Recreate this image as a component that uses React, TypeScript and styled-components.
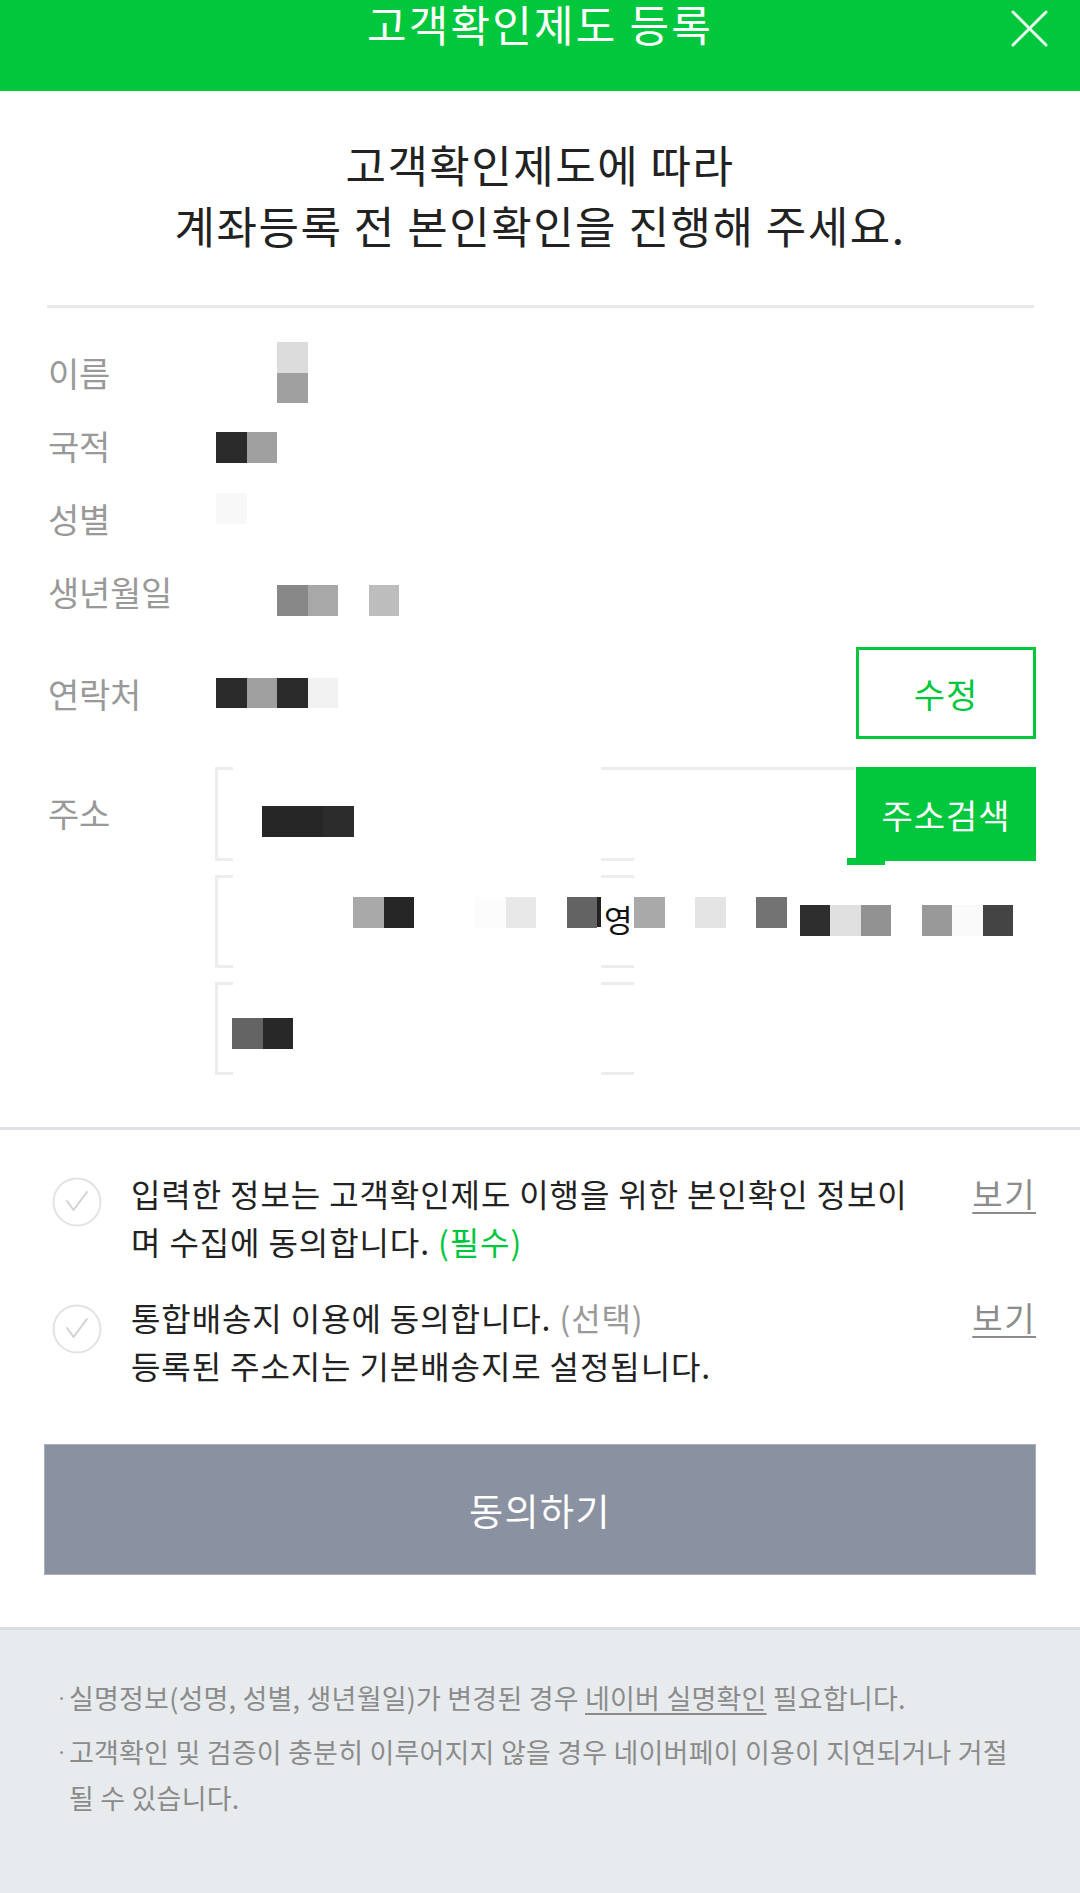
import React from "react";
import styled, { createGlobalStyle } from "styled-components";

const GREEN = "#00c73c";

const GlobalStyle = createGlobalStyle`
  html, body { margin: 0; padding: 0; background: #fff; }
  body {
    font-family: "Noto Sans CJK KR", "Noto Sans", sans-serif;
    -webkit-font-smoothing: antialiased;
  }
  * { box-sizing: border-box; }
`;

const Page = styled.div`
  width: 1080px;
  min-height: 1893px;
  display: flex;
  flex-direction: column;
  background: #fff;
`;

/* ---------- header ---------- */
const Header = styled.header`
  height: 91px;
  background: ${GREEN};
  display: grid;
  grid-template-columns: 1fr auto 1fr;
  align-items: start;
`;

const HeaderTitle = styled.h1`
  grid-column: 2;
  margin: 0;
  color: #fff;
  font-size: 43px;
  font-weight: 400;
  line-height: 46px;
  letter-spacing: 2.2px;
  white-space: nowrap;
`;

const CloseButton = styled.button`
  grid-column: 3;
  justify-self: end;
  margin: 10px 32px 0 0;
  padding: 0;
  width: 37px;
  height: 37px;
  border: 0;
  background: none;
  display: flex;
`;

/* ---------- intro ---------- */
const Intro = styled.h2`
  margin: 0;
  padding: 43px 0 49px;
  text-align: center;
  color: #222;
  font-size: 44px;
  font-weight: 400;
  line-height: 61px;
  letter-spacing: 1.5px;
`;

const Divider = styled.hr`
  margin: 0 46px 0 47px;
  border: 0;
  height: 3px;
  background: #e9e9e9;
`;

/* ---------- info ---------- */
const Info = styled.section`
  padding: 28px 44px 52px 48px;
  display: flex;
  flex-direction: column;
`;

const InfoRow = styled.div<{ $gapTop?: number }>`
  display: grid;
  grid-template-columns: 168px 1fr auto;
  align-items: center;
  min-height: 73px;
  margin-top: ${(p) => p.$gapTop ?? 0}px;
`;

const AddressRow = styled.div`
  display: grid;
  grid-template-columns: 168px 1fr;
  align-items: start;
  margin-top: 28px;
`;

const Label = styled.div<{ $top?: number }>`
  color: #999;
  font-size: 34px;
  line-height: 73px;
  letter-spacing: -0.3px;
  white-space: nowrap;
  margin-top: ${(p) => p.$top ?? 0}px;
`;

const Mosaic = styled.div<{ $dx?: number; $dy?: number; $cols: number }>`
  display: grid;
  grid-template-columns: repeat(${(p) => p.$cols}, 30.5px);
  grid-auto-rows: 30.5px;
  margin-left: ${(p) => p.$dx ?? 0}px;
  transform: translateY(${(p) => p.$dy ?? 0}px);
`;

const Cell = styled.span<{ $c: string | null }>`
  background: ${(p) => p.$c ?? "transparent"};
`;

type Cells = (string | null)[][];

const Redacted: React.FC<{ cells: Cells; dx?: number; dy?: number }> = ({ cells, dx, dy }) => {
  const cols = Math.max(...cells.map((r) => r.length));
  return (
    <Mosaic $cols={cols} $dx={dx} $dy={dy}>
      {cells.flatMap((row, ri) =>
        Array.from({ length: cols }, (_, ci) => <Cell key={`${ri}-${ci}`} $c={row[ci] ?? null} />)
      )}
    </Mosaic>
  );
};

const Value = styled.div`
  display: flex;
  align-items: center;
  min-height: 73px;
`;

const OutlineButton = styled.button`
  width: 180px;
  height: 92px;
  border: 3px solid ${GREEN};
  background: #fff;
  color: ${GREEN};
  font-family: inherit;
  font-size: 34px;
  letter-spacing: 1px;
  padding: 0;
`;

const AddressGrid = styled.div`
  display: grid;
  grid-template-columns: 1fr 180px;
  row-gap: 14px;
  margin-left: -1px;
`;

const AddressBox = styled.div<{ $first?: boolean; $padX: number; $padY: number }>`
  grid-column: ${(p) => (p.$first ? "1" : "1 / span 2")};
  height: ${(p) => (p.$first ? 94 : 93)}px;
  padding: ${(p) => p.$padY}px 0 0 ${(p) => p.$padX}px;
  display: flex;
  align-items: flex-start;
  background-repeat: no-repeat;
  background-image:
    linear-gradient(#ededed, #ededed),
    linear-gradient(#ededed, #ededed),
    linear-gradient(#ededed, #ededed),
    linear-gradient(#ededed, #ededed),
    linear-gradient(#ededed, #ededed);
  background-size:
    3px 100%,
    18px 3px,
    18px 3px,
    ${(p) => (p.$first ? "254px" : "33px")} 3px,
    33px 3px;
  background-position:
    0 0,
    0 0,
    0 100%,
    386px 0,
    386px 100%;
`;

const SearchButton = styled.button`
  position: relative;
  height: 94px;
  border: 0;
  background: ${GREEN};
  color: #fff;
  font-family: inherit;
  font-size: 34px;
  letter-spacing: 1px;
  padding: 0;
  &::after {
    content: "";
    position: absolute;
    left: -9px;
    bottom: -4px;
    width: 38px;
    height: 7px;
    background: ${GREEN};
  }
`;

const FragmentGlyph = styled.span`
  display: block;
  width: 37px;
  height: 30px;
  padding-left: 3px;
  border-left: 4px solid #222;
  color: #111;
  font-size: 31px;
  line-height: 44px;
  white-space: nowrap;
`;

/* ---------- agreement ---------- */
const Agreements = styled.section`
  border-top: 3px solid #e0e3e6;
  padding: 39px 44px 55px 52px;
  display: flex;
  flex-direction: column;
  gap: 28px;
`;

const AgreeRow = styled.div`
  display: grid;
  grid-template-columns: 50px 1fr auto;
  column-gap: 29px;
  align-items: start;
`;

const CheckCircle = styled.svg<{ $top: number }>`
  width: 50px;
  height: 50px;
  margin-top: ${(p) => p.$top}px;
`;

const AgreeText = styled.p`
  margin: 0;
  color: #222;
  font-size: 32px;
  line-height: 48px;
  letter-spacing: 0.9px;
  white-space: nowrap;
`;

const Tag = styled.span<{ $required?: boolean }>`
  color: ${(p) => (p.$required ? GREEN : "#999")};
`;

const ViewLink = styled.a`
  color: #8c8c8c;
  font-size: 33px;
  line-height: 48px;
  letter-spacing: 1.5px;
  text-decoration: underline;
  text-underline-offset: 5px;
  text-decoration-thickness: 2px;
`;

const AgreeButton = styled.button`
  margin: 0 44px 52px 44px;
  height: 131px;
  border: 1px solid #a9afba;
  background: #8a91a1;
  color: #fff;
  font-family: inherit;
  font-size: 37px;
  letter-spacing: 1.5px;
`;

/* ---------- footer ---------- */
const Notice = styled.footer`
  flex: 1;
  background: #e8ebee;
  border-top: 3px solid #dadde1;
  padding: 45px 30px 40px 56px;
  display: flex;
  flex-direction: column;
  gap: 8px;
`;

const NoticeItem = styled.div`
  display: flex;
  color: #8b8b8b;
  font-size: 27px;
  line-height: 46px;
  letter-spacing: 0.2px;
  white-space: nowrap;
`;

const Dot = styled.span`
  flex: 0 0 13px;
  font-size: 20px;
`;

const NoticeLink = styled.span`
  text-decoration: underline;
  text-underline-offset: 4px;
`;

const Check: React.FC<{ top: number }> = ({ top }) => (
  <CheckCircle $top={top} viewBox="0 0 50 50" fill="none">
    <circle cx="25" cy="25" r="23.5" stroke="#e3e3e3" strokeWidth="2" />
    <path d="M15 24 L21.5 33 L35 15" stroke="#d2d2d2" strokeWidth="2" strokeLinecap="round" strokeLinejoin="round" />
  </CheckCircle>
);

export default function App() {
  return (
    <>
      <GlobalStyle />
      <Page>
        <Header>
          <HeaderTitle>고객확인제도 등록</HeaderTitle>
          <CloseButton aria-label="닫기">
            <svg width="37" height="37" viewBox="0 0 37 37">
              <path d="M2 2 L35 35 M35 2 L2 35" stroke="#eafff0" strokeWidth="3" strokeLinecap="round" />
            </svg>
          </CloseButton>
        </Header>

        <Intro>
          고객확인제도에 따라
          <br />
          계좌등록 전 본인확인을 진행해 주세요.
        </Intro>
        <Divider />

        <Info>
          <InfoRow>
            <Label>이름</Label>
            <Value>
              <Redacted dx={61} cells={[["#dcdcdc"], ["#a0a0a0"]]} />
            </Value>
          </InfoRow>
          <InfoRow>
            <Label>국적</Label>
            <Value>
              <Redacted dy={2} cells={[["#2a2a2a", "#a0a0a0"]]} />
            </Value>
          </InfoRow>
          <InfoRow>
            <Label>성별</Label>
            <Value>
              <Redacted dy={-10} cells={[["#f8f8f8"]]} />
            </Value>
          </InfoRow>
          <InfoRow>
            <Label>생년월일</Label>
            <Value>
              <Redacted dx={61} dy={9} cells={[["#888888", "#a8a8a8", null, "#bdbdbd"]]} />
            </Value>
          </InfoRow>
          <InfoRow $gapTop={19}>
            <Label>연락처</Label>
            <Value>
              <Redacted cells={[["#2a2a2a", "#9f9f9f", "#2a2a2a", "#f2f2f2"]]} />
            </Value>
            <OutlineButton>수정</OutlineButton>
          </InfoRow>
          <AddressRow>
            <Label $top={9}>주소</Label>
            <AddressGrid>
              <AddressBox $first $padX={47} $padY={39}>
                <Redacted cells={[["#262626", "#262626", "#2c2c2c"]]} />
              </AddressBox>
              <SearchButton>주소검색</SearchButton>
              <AddressBox $padX={138} $padY={22}>
                <Redacted cells={[["#a9a9a9", "#262626", null, null, "#fcfcfc", "#e8e8e8", null, "#636363"]]} />
                <FragmentGlyph>영</FragmentGlyph>
                <Redacted cells={[["#a9a9a9", null, "#e4e4e4", null, "#737373"]]} />
                <Redacted dx={13} dy={8} cells={[["#2e2e2e", "#e0e0e0", "#929292", null, "#999999", "#fafafa", "#444444"]]} />
              </AddressBox>
              <AddressBox $padX={17} $padY={36}>
                <Redacted cells={[["#646464", "#282828"]]} />
              </AddressBox>
            </AddressGrid>
          </AddressRow>
        </Info>

        <Agreements>
          <AgreeRow>
            <Check top={8} />
            <AgreeText>
              입력한 정보는 고객확인제도 이행을 위한 본인확인 정보이
              <br />
              며 수집에 동의합니다. <Tag $required>(필수)</Tag>
            </AgreeText>
            <ViewLink>보기</ViewLink>
          </AgreeRow>
          <AgreeRow>
            <Check top={11} />
            <AgreeText>
              통합배송지 이용에 동의합니다. <Tag>(선택)</Tag>
              <br />
              등록된 주소지는 기본배송지로 설정됩니다.
            </AgreeText>
            <ViewLink>보기</ViewLink>
          </AgreeRow>
        </Agreements>

        <AgreeButton>동의하기</AgreeButton>

        <Notice>
          <NoticeItem>
            <Dot>·</Dot>
            <span>
              실명정보(성명, 성별, 생년월일)가 변경된 경우 <NoticeLink>네이버 실명확인</NoticeLink> 필요합니다.
            </span>
          </NoticeItem>
          <NoticeItem>
            <Dot>·</Dot>
            <span>
              고객확인 및 검증이 충분히 이루어지지 않을 경우 네이버페이 이용이 지연되거나 거절
              <br />될 수 있습니다.
            </span>
          </NoticeItem>
        </Notice>
      </Page>
    </>
  );
}
